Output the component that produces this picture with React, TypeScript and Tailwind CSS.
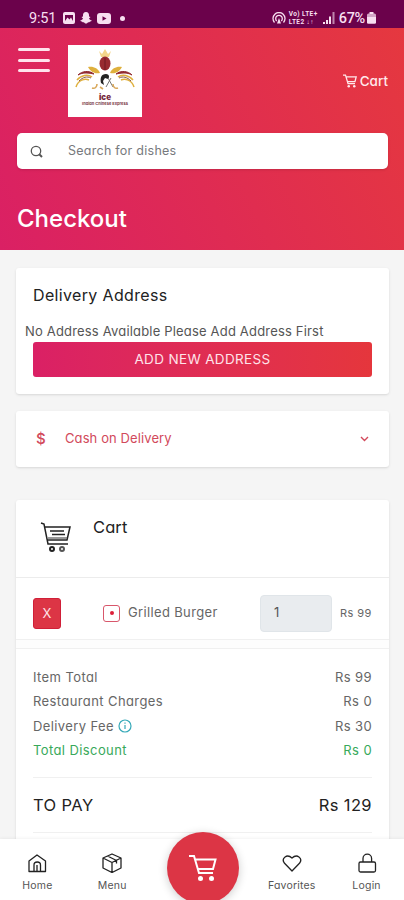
import { ReactNode } from "react";

const totals = [
  { label: "Item Total", value: "Rs 99" },
  { label: "Restaurant Charges", value: "Rs 0" },
  { label: "Delivery Fee", value: "Rs 30", info: true },
  { label: "Total Discount", value: "Rs 0", green: true },
];

function CartIcon({ className }: { className?: string }) {
  return (
    <svg viewBox="0 0 28 28" fill="none" stroke="currentColor" className={className}>
      <path d="M0 2h5l5 17h14M6 5.5h20.500L24 15H9" />
      <circle cx="11.5" cy="24.5" r="2.5" fill="currentColor" stroke="none" />
      <circle cx="22.5" cy="24.5" r="2.5" fill="currentColor" stroke="none" />
    </svg>
  );
}

function StatusBar() {
  return (
    <div className="flex h-[28px] shrink-0 items-center bg-[#6b024b] pl-[29px] pr-[28px] pt-[8px] font-[Roboto] text-[#f7dff0]">
      <span className="w-[34px] pt-[2px] text-[14.5px] leading-none tracking-[-0.2px]">9:51</span>
      <svg viewBox="0 0 12 12" className="h-[12px] w-[12px]">
        <rect width="12" height="12" rx="2" fill="currentColor" />
        <path d="M2 3h8v6H2z" fill="#6b024b" />
        <path d="M2 9l2.500-3.500 2 2L8 5.500 10 9z" fill="currentColor" />
      </svg>
      <svg viewBox="0 0 12 12" className="ml-[5px] h-[12px] w-[12px]" fill="currentColor">
        <path d="M6 0C3.800 0 3 1.600 3 3v1.500L1.500 5 3 6.500C2.500 7.500 1.500 8.200.2 8.600c.2.900 1.300.9 1.800 1 .2.900 1.300.5 2 .8.700.4 1 1.100 2 1.100s1.300-.7 2-1.100c.7-.3 1.800.1 2-.8.500-.1 1.600-.1 1.800-1C10.500 8.200 9.500 7.500 9 6.500L10.500 5 9 4.500V3c0-1.400-.8-3-3-3z" />
      </svg>
      <svg viewBox="0 0 14 11" className="ml-[5px] h-[11px] w-[14px]">
        <rect width="14" height="11" rx="3" fill="currentColor" />
        <path d="M5.500 3.200v4.600l4-2.300z" fill="#6b024b" />
      </svg>
      <span className="ml-[9px] h-[5px] w-[5px] rounded-full bg-[#f7dff0]" />
      <div className="ml-auto flex items-center">
        <svg viewBox="0 0 14 12" className="h-[12px] w-[14px]" fill="none" stroke="currentColor" strokeWidth="1.300">
          <path d="M2.500 10.500a6 6 0 1 1 9 0M4.700 9a3.300 3.300 0 1 1 4.600 0" />
          <path d="M7 6l-2 5.500h4z" fill="currentColor" stroke="none" />
        </svg>
        <div className="ml-[3px] flex w-[32px] flex-col text-[6.5px] font-bold leading-[8px] tracking-[0.4px]">
          <span className="whitespace-nowrap">Vo) LTE+</span>
          <span className="whitespace-nowrap">LTE2 ↓↑</span>
        </div>
        <svg viewBox="0 0 12 12" className="ml-[2px] h-[12px] w-[12px]" fill="currentColor">
          <path d="M0 10h2v2H0zM3 8h2v4H3zM6 4.500h2V12H6z" />
          <path d="M9.500 0h2v12h-2z" opacity=".6" />
        </svg>
        <span className="ml-[4px] pt-[2px] text-[14.5px] font-medium leading-none tracking-[-0.3px]">67%</span>
        <svg viewBox="0 0 9 12" className="ml-[2px] h-[12px] w-[9px]" fill="currentColor">
          <path d="M2.500 0h4v2h-4z" />
          <rect y="1.500" width="9" height="10.500" rx="1.500" opacity=".75" />
          <path d="M0 5h9v6H0z" />
        </svg>
      </div>
    </div>
  );
}

function Logo() {
  return (
    <div className="ml-[18px] flex h-[72px] w-[74px] flex-col items-center bg-white pt-[4px]">
      <svg viewBox="0 0 62 42" className="h-[42px] w-[62px]" fill="none">
        <path d="M25 2l3 3 3-5 3 5 3-3-2 6h-8z" fill="#f3d58a" />
        <ellipse cx="31" cy="14.500" rx="5.500" ry="7" fill="#982a30" />
        <path d="M31 9v12" stroke="#6d1820" strokeWidth="1" />
        <path d="M14 18c5-1 10 1 12 6-6 1-9-1-12-6zM48 18c-5-1-10 1-12 6 6 1 9-1 12-6z" fill="#dfb03d" />
        <path d="M4 26c4-4 11-5 16-1-5-1-11-2-16 1zM58 26c-4-4-11-5-16-1 5-1 11-2 16 1z" fill="#922b31" stroke="#922b31" strokeWidth="1" />
        <path d="M3 31c4-5 11-6 15-3M2 38c2-7 9-9 13-7M59 31c-4-5-11-6-15-3M60 38c-2-7-9-9-13-7" stroke="#dfb03d" strokeWidth="1.500" />
        <path d="M5 32c4-4 8-5 12-3M57 32c-4-4-8-5-12-3" stroke="#8a5950" strokeWidth="1" />
        <path d="M27 34c-1-5 0-9 5-9 3 0 4 3 2 5l-3-1-2 3 1 4z" fill="#222" />
        <path d="M34 29l5 9M37 29l-5 9" stroke="#777" strokeWidth="1" />
        <path d="M18 39c3 1 5-1 5-4M44 39c-3 1-5-1-5-4M26 38l3 2" stroke="#d9a85b" strokeWidth="1.600" />
      </svg>
      <span className="mt-[2px] text-[8px] font-black leading-[8px] text-[#762a3d]">ice</span>
      <span className="whitespace-nowrap text-[4px] font-bold leading-[6px] text-[#7d3c49]">Indian Chinese Express</span>
    </div>
  );
}

function Header() {
  return (
    <header className="h-[222px] shrink-0 bg-linear-[65deg] from-[#da2064] to-[#e5383f] px-[17px] pt-[17px] text-white">
      <div className="flex h-[72px]">
        <div className="ml-[1px] mt-[3px] flex w-[32px] flex-col gap-[7.5px]">
          <span className="h-[3px] rounded-full bg-[#ffe3ec]" />
          <span className="h-[3px] rounded-full bg-[#ffe3ec]" />
          <span className="h-[3px] rounded-full bg-[#ffe3ec]" />
        </div>
        <Logo />
        <div className="-mr-[1px] ml-auto flex h-[72px] items-center gap-[3px] text-[13.5px] font-medium text-[#ffe9ec]">
          <CartIcon className="h-[14px] w-[14px] stroke-[2.500]" />
          <span>Cart</span>
        </div>
      </div>
      <div className="mt-[16px] flex h-[36px] w-[371px] items-center rounded-[5px] bg-white pl-[13px] shadow-sm">
        <svg viewBox="0 0 13 13" className="h-[13px] w-[13px]" fill="none" stroke="#555" strokeWidth="1.300">
          <circle cx="6" cy="6" r="4.700" />
          <path d="M9 9l3 3" strokeWidth="2" />
        </svg>
        <span className="ml-[25px] text-[12.5px] tracking-[0.26px] text-[#77797d]">Search for dishes</span>
      </div>
      <h1 className="mt-[34px] text-[24px] font-medium leading-[32px]">Checkout</h1>
    </header>
  );
}

function NavItem({ label, children }: { label: string; children: ReactNode }) {
  return (
    <div className="flex w-[75px] flex-col items-center pt-[14px] text-[#222]">
      <svg viewBox="0 0 20 20" className="h-[20px] w-[20px]" fill="none" stroke="currentColor" strokeWidth="1.300" strokeLinejoin="round">
        {children}
      </svg>
      <span className="mt-[6px] text-[10.5px] leading-[14px] tracking-[0.2px] text-[#555]">{label}</span>
    </div>
  );
}

function BottomNav() {
  return (
    <nav className="relative flex h-[61px] shrink-0 bg-white shadow-[0_-1px_3px_rgba(0,0,0,0.05)]">
      <NavItem label="Home">
        <path d="M2 8l8-6 8.500 6v10.500H2z" />
        <path d="M7 18.500V12c0-4 6.500-4 6.500 0v6.500M10 18.500V12" />
      </NavItem>
      <NavItem label="Menu">
        <path d="M10 1l9 4v10l-9 4.500L1 15V5zM1 5l9 4.500L19 5M10 9.500v10M5.500 3l9 4.500v3" />
      </NavItem>
      <div className="w-[105px]" />
      <NavItem label="Favorites">
        <path d="M10 18L2.300 10C-1 5 5 .5 10 5c5-4.500 11 0 7.700 5z" />
      </NavItem>
      <NavItem label="Login">
        <rect x="2" y="9" width="16.500" height="10" rx="1.500" />
        <path d="M6 9V5.500a4.300 4.300 0 0 1 8.600 0V9" />
      </NavItem>
      <div className="absolute left-[167px] top-[-7px] flex h-[72px] w-[72px] items-center justify-center rounded-full bg-[#dc3545] text-white shadow-[0_2px_10px_rgba(0,0,0,0.2)]">
        <CartIcon className="h-[28px] w-[28px] stroke-2" />
      </div>
    </nav>
  );
}

export default function App() {
  return (
    <div className="flex h-[900px] w-[404px] flex-col overflow-hidden bg-[#f5f5f5] font-[Inter,sans-serif] [font-feature-settings:'cv11']">
      <StatusBar />
      <Header />
      <main className="min-h-0 flex-1 overflow-hidden pl-[16px] pr-[15px] pt-[18px]">
        <section className="h-[126px] rounded-[3px] bg-white px-[17px] pt-[15px] shadow-sm">
          <h2 className="text-[16px] leading-[24px] tracking-[0.35px] text-[#222]">Delivery Address</h2>
          <p className="-ml-[8px] mt-[14px] h-[21px] whitespace-nowrap text-[13px] leading-[20px] tracking-[0.18px] text-[#555]">
            No Address Available Please Add Address First
          </p>
          <button className="block h-[35px] w-[339px] rounded-[3px] bg-linear-to-r from-[#da2065] to-[#e5363c] text-[13.5px] tracking-[0.35px] text-[#ffe3ea]">
            ADD NEW ADDRESS
          </button>
        </section>

        <section className="mt-[17px] flex h-[56px] items-center rounded-[3px] bg-white pl-[20px] pr-[20px] text-[#d2495b] shadow-sm">
          <span className="w-[29px] text-[15px] font-medium">$</span>
          <span className="text-[13px] tracking-[0.1px]">Cash on Delivery</span>
          <svg viewBox="0 0 9 6" className="ml-auto h-[6px] w-[9px]" fill="none" stroke="currentColor" strokeWidth="1.400">
            <path d="M1 1l3.500 3.500L8 1" />
          </svg>
        </section>

        <section className="mt-[33px] h-[360px] rounded-t-[3px] bg-white shadow-sm">
          <div className="flex h-[78px] border-b border-[#ececec] pl-[24px] pt-[21px]">
            <svg viewBox="0 0 32 32" className="h-[32px] w-[32px]" fill="none" stroke="#222" strokeWidth="1.500">
              <path d="M1 2l3 1 4 20h20M5 6h25l-3 13H7M10 10h14M12 13.500h13" />
              <path d="M8 17h19" stroke="#777" />
              <circle cx="12" cy="28" r="2" strokeWidth="2" />
              <circle cx="22" cy="28" r="2" strokeWidth="2" stroke="#555" />
            </svg>
            <h2 className="-mt-[6px] ml-[21px] text-[16.5px] leading-[24px] tracking-[0.1px] text-[#222]">Cart</h2>
          </div>
          <div className="flex h-[62px] items-center border-b border-[#f0f0f0] pl-[17px] pt-[9px]">
            <button className="h-[31px] w-[28px] rounded-[3px] border border-[#d01f38] bg-[#dc3545] text-[13px] leading-none text-[#ffe3e8]">X</button>
            <span className="ml-[42px] flex h-[17px] w-[17px] items-center justify-center rounded-[3px] border border-[#d8576b]">
              <span className="h-[4px] w-[4px] rounded-full bg-[#dc2039]" />
            </span>
            <span className="ml-[8px] w-[132px] text-[13px] tracking-[0.35px] text-[#666]">Grilled Burger</span>
            <div className="flex h-[37px] w-[72px] items-center rounded-[4px] border border-[#e0e5e9] bg-[#e9ecef] pl-[13px] text-[13px] text-[#555]">1</div>
            <span className="ml-[8px] whitespace-nowrap text-[11px] tracking-[0.4px] text-[#666]">Rs 99</span>
          </div>
          <div className="h-[9px] border-b border-[#f0f0f0] bg-[#fdfdfd]" />
          <div className="px-[17px] pt-[16px] text-[13px] tracking-[0.4px] text-[#666]">
            {totals.map((row) => (
              <div
                key={row.label}
                className={`flex h-[24.500px] items-center justify-between ${row.green ? "text-[#38a95a]" : ""}`}
              >
                <span className="flex items-center">
                  {row.label}
                  {row.info && (
                    <svg viewBox="0 0 14 14" className="ml-[4px] h-[14px] w-[14px]" fill="none" stroke="#35a9b8" strokeWidth="1.200">
                      <circle cx="7" cy="7" r="6" />
                      <path d="M7 6v4M7 3.500v1.300" />
                    </svg>
                  )}
                </span>
                <span>{row.value}</span>
              </div>
            ))}
            <div className="mt-[14px] h-[56px] border-y border-[#f0f0f0]">
              <div className="flex h-[54px] items-center justify-between text-[16.5px] text-[#222]">
                <span>TO PAY</span>
                <span>Rs 129</span>
              </div>
            </div>
          </div>
        </section>
      </main>
      <BottomNav />
    </div>
  );
}
